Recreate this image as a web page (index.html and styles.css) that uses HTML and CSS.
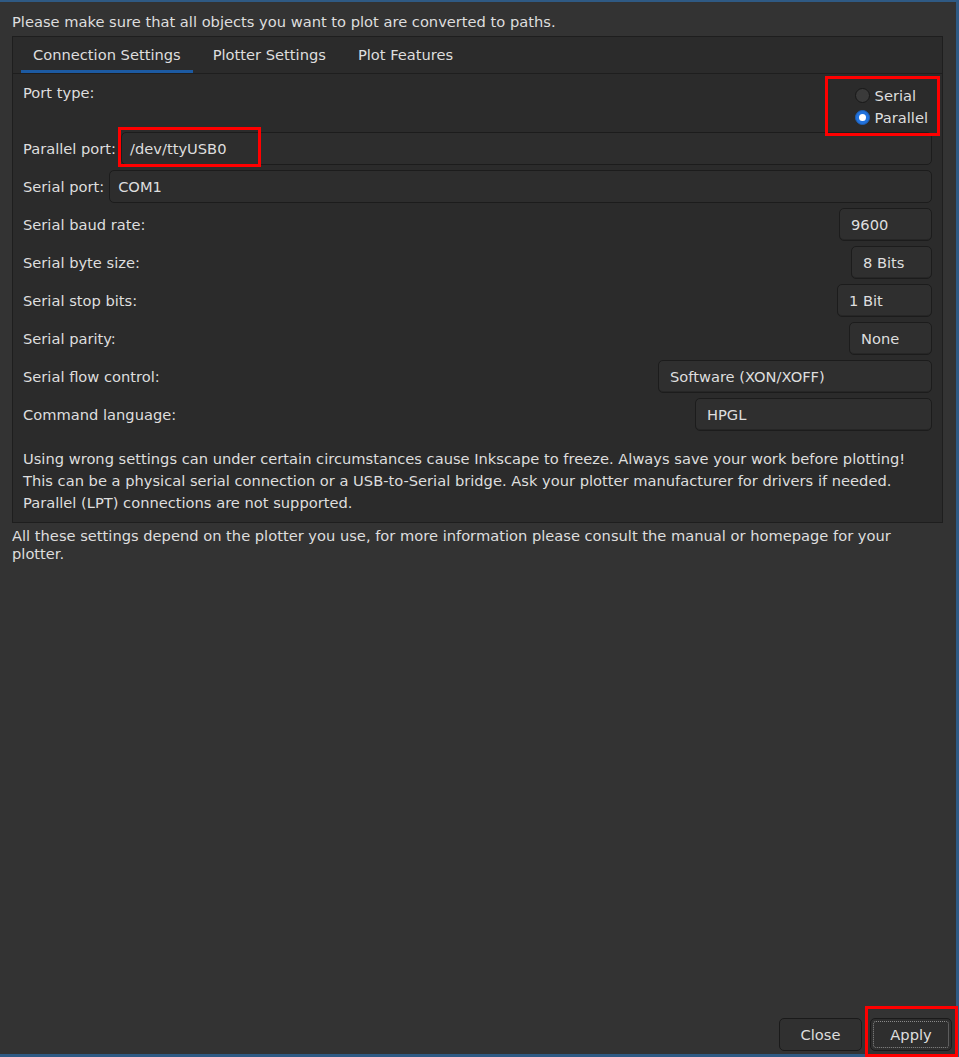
FILE: index.html
```html
<!DOCTYPE html>
<html>
<head>
<meta charset="utf-8">
<link rel="stylesheet" href="styles.css">
</head>
<body>
<div class="window">
  <div class="intro">Please make sure that all objects you want to plot are converted to paths.</div>
  <div class="notebook">
    <div class="tabs">
      <div class="tab active">Connection Settings</div>
      <div class="tab">Plotter Settings</div>
      <div class="tab">Plot Features</div>
    </div>
    <div class="page">
      <div class="row port-row">
        <div class="label">Port type:</div>
        <div class="radios">
          <div class="radio"><span class="dot"></span><span>Serial</span></div>
          <div class="radio"><span class="dot checked"></span><span>Parallel</span></div>
          <div class="mark mark-radio"></div>
        </div>
      </div>
      <div class="row">
        <div class="label">Parallel port:</div>
        <div class="entry entry-par"><span>/dev/ttyUSB0</span><div class="mark mark-entry"></div></div>
      </div>
      <div class="row">
        <div class="label">Serial port:</div>
        <div class="entry"><span>COM1</span></div>
      </div>
      <div class="row">
        <div class="label">Serial baud rate:</div>
        <div class="combo w-baud">9600</div>
      </div>
      <div class="row">
        <div class="label">Serial byte size:</div>
        <div class="combo w-byte">8 Bits</div>
      </div>
      <div class="row">
        <div class="label">Serial stop bits:</div>
        <div class="combo w-stop">1 Bit</div>
      </div>
      <div class="row">
        <div class="label">Serial parity:</div>
        <div class="combo w-parity">None</div>
      </div>
      <div class="row">
        <div class="label">Serial flow control:</div>
        <div class="combo w-flow">Software (XON/XOFF)</div>
      </div>
      <div class="row">
        <div class="label">Command language:</div>
        <div class="combo w-lang">HPGL</div>
      </div>
      <div class="info">
        <div>Using wrong settings can under certain circumstances cause Inkscape to freeze. Always save your work before plotting!</div>
        <div>This can be a physical serial connection or a USB-to-Serial bridge. Ask your plotter manufacturer for drivers if needed.</div>
        <div>Parallel (LPT) connections are not supported.</div>
      </div>
    </div>
  </div>
  <div class="note">All these settings depend on the plotter you use, for more information please consult the manual or homepage for your plotter.</div>
  <div class="spacer"></div>
  <div class="buttons">
    <div class="btn btn-close">Close</div>
    <div class="btn btn-apply"><span class="focus">Apply</span><div class="mark mark-apply"></div></div>
  </div>
</div>
</body>
</html>
```

FILE: styles.css
```css
html, body {
  margin: 0;
  padding: 0;
  background: #353535;
}
body {
  font-family: "DejaVu Sans", "Liberation Sans", sans-serif;
  font-size: 14.667px;
  color: #dedede;
}
.window {
  width: 959px;
  height: 1057px;
  box-sizing: border-box;
  border-top: 2px solid #2f5a84;
  border-right: 3px solid #2f5a84;
  border-bottom: 3px solid #2f5a84;
  background: #333333;
  display: flex;
  flex-direction: column;
}
.intro {
  padding: 11px 0 5px 12px;
  height: 34px;
  line-height: 18px;
  box-sizing: border-box;
  white-space: nowrap;
}
.notebook {
  margin: 0 13px 0 12px;
  border: 1px solid #1e1e1e;
  background: #2b2b2b;
}
.tabs {
  display: flex;
  gap: 8px;
  padding-left: 8px;
  height: 36px;
  border-bottom: 1px solid #1e1e1e;
  box-sizing: content-box;
}
.tab {
  padding: 0 12px;
  line-height: 36px;
  height: 36px;
  box-sizing: border-box;
  white-space: nowrap;
}
.tab.active {
  border-bottom: 3px solid #1c5aa2;
}
.page {
  padding: 6px 10px 8px 10px;
  display: flex;
  flex-direction: column;
  gap: 5px;
}
.row {
  display: flex;
  align-items: center;
  height: 33px;
}
.label {
  white-space: nowrap;
  margin-right: 5px;
  line-height: 18px;
}
.port-row {
  height: 47px;
  align-items: flex-start;
}
.port-row .label {
  margin-top: 4px;
}
.radios {
  margin-left: auto;
  margin-right: 4px;
  margin-top: 4px;
  display: flex;
  flex-direction: column;
  position: relative;
}
.radio {
  display: flex;
  align-items: center;
  height: 22px;
  gap: 5px;
}
.dot {
  width: 13px;
  height: 13px;
  border-radius: 50%;
  border: 1px solid #181818;
  background: #3a3a3a;
  box-sizing: content-box;
  position: relative;
}
.dot.checked {
  background: #2272dc;
  border-color: #1d5fb5;
}
.dot.checked::after {
  content: "";
  position: absolute;
  left: 3px;
  top: 3px;
  width: 7px;
  height: 7px;
  border-radius: 50%;
  background: #ffffff;
}
.entry {
  flex: 1;
  height: 33px;
  box-sizing: border-box;
  border: 1px solid #1c1c1c;
  border-radius: 5px;
  background: #2d2d2d;
  display: flex;
  align-items: center;
  padding-left: 8px;
  position: relative;
}
.combo {
  margin-left: auto;
  height: 33px;
  box-sizing: border-box;
  border: 1px solid #1c1c1c;
  border-radius: 5px;
  background: #2f2f2f;
  box-shadow: inset 0 -1px 0 #262626;
  display: flex;
  align-items: center;
  padding-left: 11px;
  white-space: nowrap;
}
.w-baud { width: 93px; }
.w-byte { width: 81px; }
.w-stop { width: 95px; }
.w-parity { width: 83px; }
.w-flow { width: 274px; }
.w-lang { width: 237px; }
.info {
  margin-top: 12px;
  line-height: 22px;
}
.note {
  margin: 4px 13px 0 12px;
  line-height: 18px;
}
.spacer {
  flex: 1;
}
.buttons {
  display: flex;
  justify-content: flex-end;
  gap: 8px;
  padding: 0 4px 3px 0;
}
.btn {
  height: 33px;
  box-sizing: border-box;
  border: 1px solid #1a1a1a;
  border-radius: 5px;
  background: #303030;
  display: flex;
  align-items: center;
  justify-content: center;
  position: relative;
}
.btn-close { width: 83px; }
.btn-apply {
  width: 82px;
  background: #2e2e2e;
}
.btn-apply::before {
  content: "";
  position: absolute;
  left: 2px;
  top: 2px;
  right: 2px;
  bottom: 2px;
  border: 1px dotted #8a8a8a;
  border-radius: 3px;
}
.mark {
  position: absolute;
  z-index: 5;
  border: 3px solid #ff0000;
  box-sizing: border-box;
  pointer-events: none;
}
.mark-radio {
  left: -30px;
  top: -8px;
  width: 115px;
  height: 60px;
}
.mark-entry {
  left: -4px;
  top: -6px;
  width: 143px;
  height: 40px;
}
.mark-apply {
  left: -6px;
  top: -13px;
  width: 93px;
  height: 51px;
}
```
